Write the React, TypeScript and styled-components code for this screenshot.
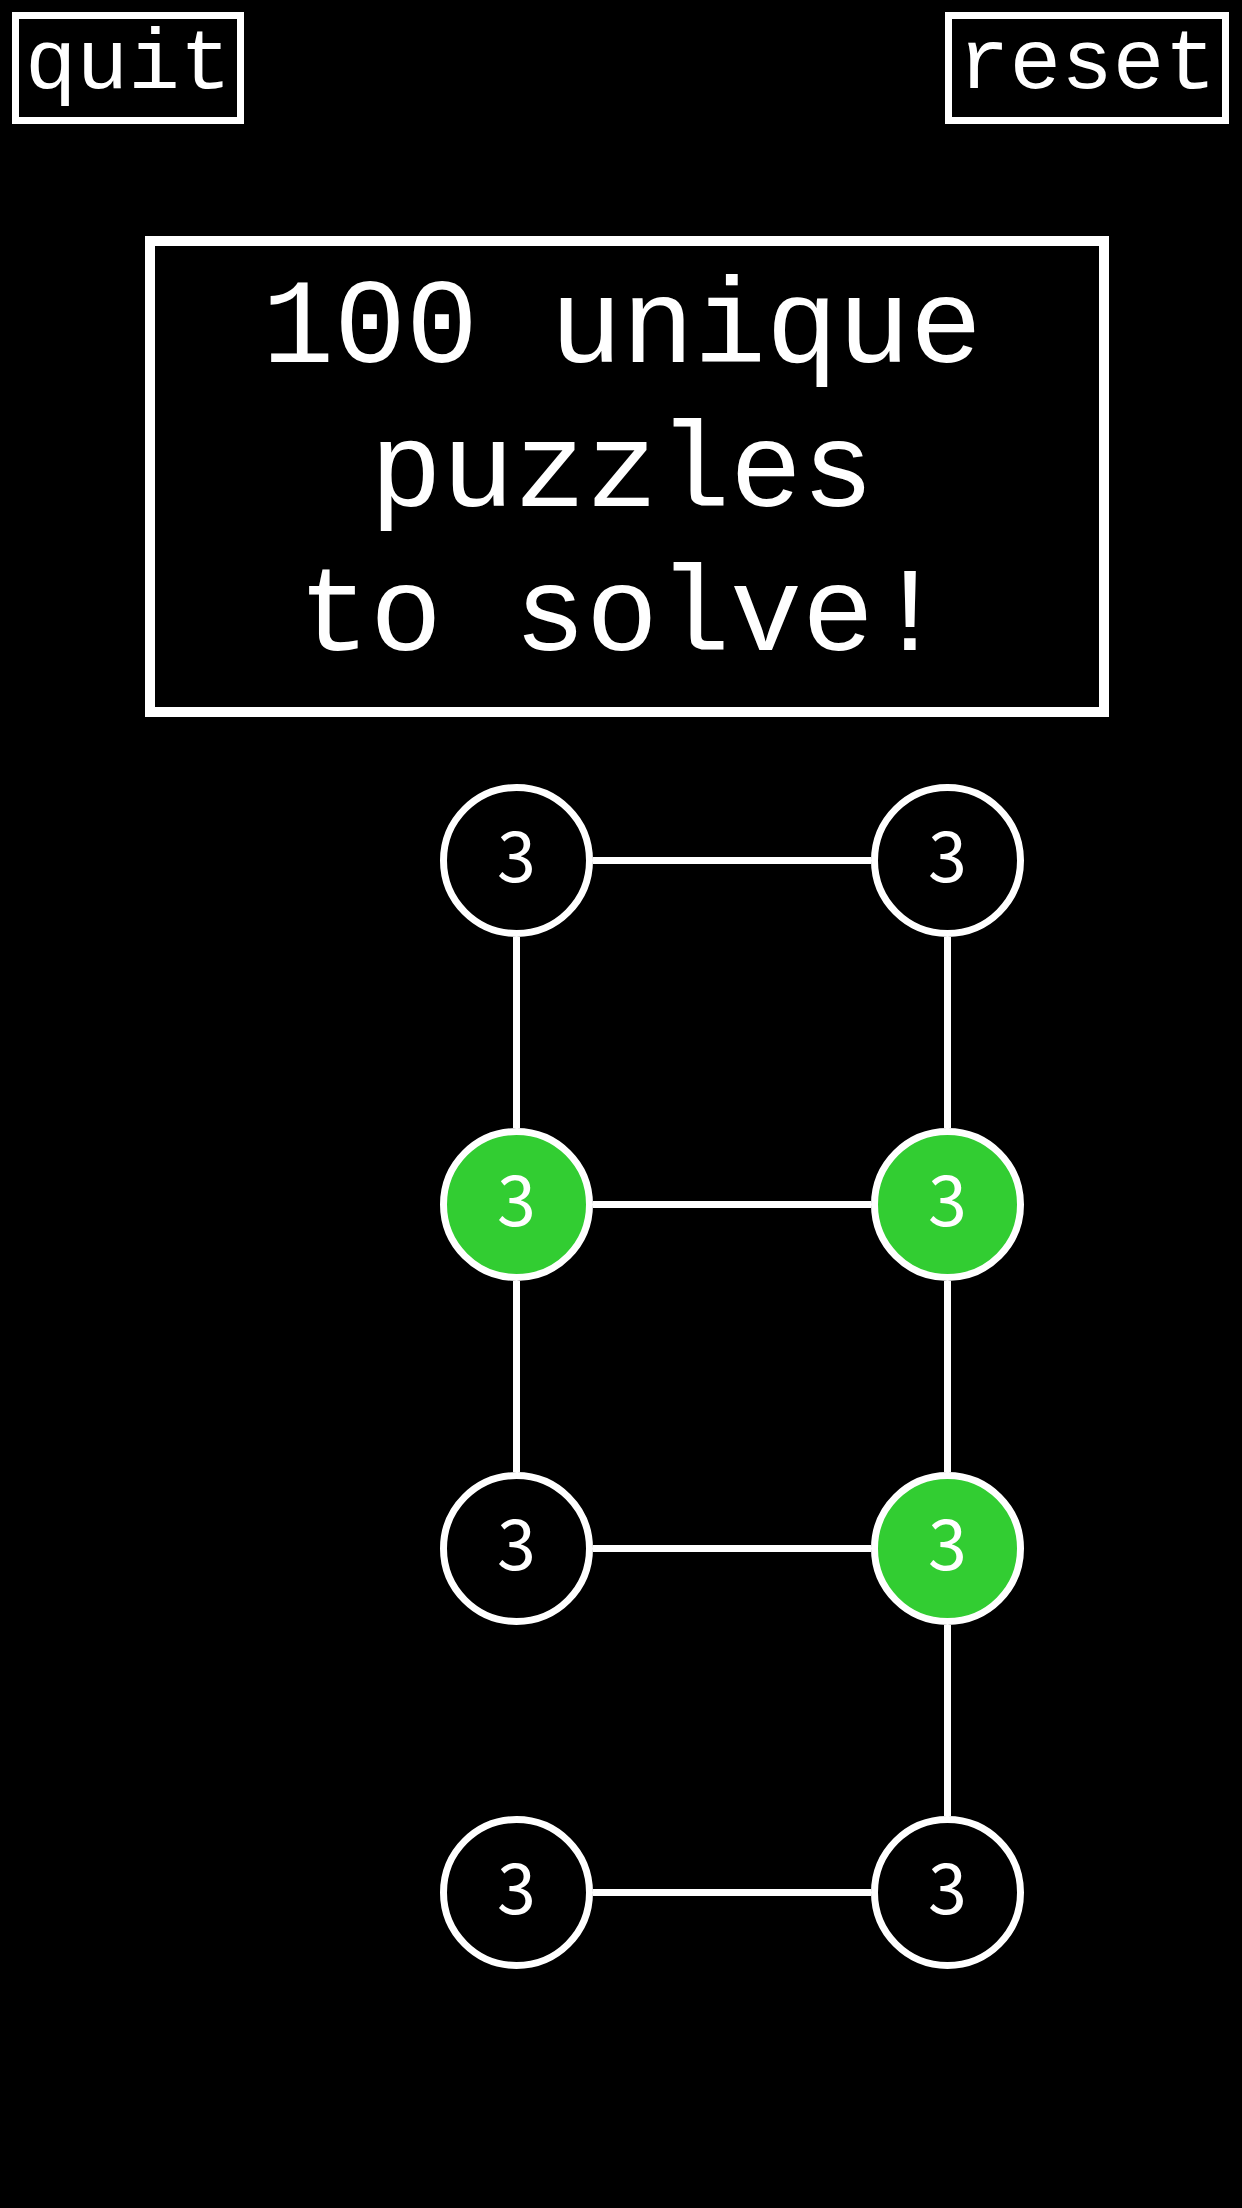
import React, { useState } from "react";
import styled, { createGlobalStyle } from "styled-components";

const GlobalStyle = createGlobalStyle`
  *, *::before, *::after {
    box-sizing: border-box;
  }
  body {
    margin: 0;
    background: #000;
    color: #fff;
    font-family: "Liberation Mono", monospace;
  }
`;

const Page = styled.div`
  min-height: 100vh;
  display: flex;
  flex-direction: column;
`;

const TopBar = styled.header`
  display: flex;
  justify-content: space-between;
  padding: 12px 13px 0 12px;
`;

const BarButton = styled.button`
  padding: 0 6px 6px;
  border: 7px solid #fff;
  background: #000;
  color: #fff;
  font: inherit;
  font-size: 86px;
  line-height: 92px;
  cursor: pointer;
`;

const Banner = styled.h1`
  margin: 112px 133px 0 145px;
  padding: 12px 10px 17px 0;
  border: 10px solid #fff;
  font-size: 120px;
  font-weight: 400;
  line-height: 144px;
  text-align: center;
`;

const BannerLine = styled.span`
  display: block;
`;

const Board = styled.main`
  display: grid;
  grid-template-columns: 153px 278px 153px;
  grid-auto-rows: 153px 191px;
  place-content: center;
  place-items: center;
  margin-top: 67px;
  padding-left: 222px;
`;

const Node = styled.button<{ $lit: boolean }>`
  width: 153px;
  height: 153px;
  padding: 0 0 18px;
  border: 7px solid #fff;
  border-radius: 50%;
  background: ${({ $lit }) => ($lit ? "#32cd32" : "#000")};
  color: #fff;
  font-family: "Noto Sans CJK SC", sans-serif;
  font-size: 70px;
  line-height: 100px;
  cursor: pointer;
`;

const Across = styled.span`
  width: 100%;
  height: 7px;
  background: #fff;
`;

const Down = styled.span`
  width: 7px;
  height: 100%;
  background: #fff;
`;

/* One entry per board row: two nodes, and whether each links to the row below. */
const rows = [
  { nodes: [3, 3], links: [true, true] },
  { nodes: [3, 3], links: [true, true] },
  { nodes: [3, 3], links: [false, true] },
  { nodes: [3, 3], links: [false, false] },
];

const startLit = ["1-0", "1-1", "2-1"];

export default function App() {
  const [lit, setLit] = useState<string[]>(startLit);

  const toggle = (id: string) =>
    setLit((now) => (now.includes(id) ? now.filter((n) => n !== id) : [...now, id]));

  const renderNode = (row: number, col: number) => {
    const id = `${row}-${col}`;
    const isLit = lit.includes(id);
    return (
      <Node type="button" $lit={isLit} aria-pressed={isLit} onClick={() => toggle(id)}>
        {rows[row].nodes[col]}
      </Node>
    );
  };

  return (
    <Page>
      <GlobalStyle />
      <TopBar>
        <BarButton type="button">quit</BarButton>
        <BarButton type="button" onClick={() => setLit(startLit)}>
          reset
        </BarButton>
      </TopBar>
      <Banner>
        <BannerLine>100 unique</BannerLine>
        <BannerLine>puzzles</BannerLine>
        <BannerLine>to solve!</BannerLine>
      </Banner>
      <Board>
        {rows.map((row, i) => (
          <React.Fragment key={i}>
            {renderNode(i, 0)}
            <Across />
            {renderNode(i, 1)}
            {i < rows.length - 1 && (
              <>
                {row.links[0] ? <Down /> : <span />}
                <span />
                {row.links[1] ? <Down /> : <span />}
              </>
            )}
          </React.Fragment>
        ))}
      </Board>
    </Page>
  );
}
